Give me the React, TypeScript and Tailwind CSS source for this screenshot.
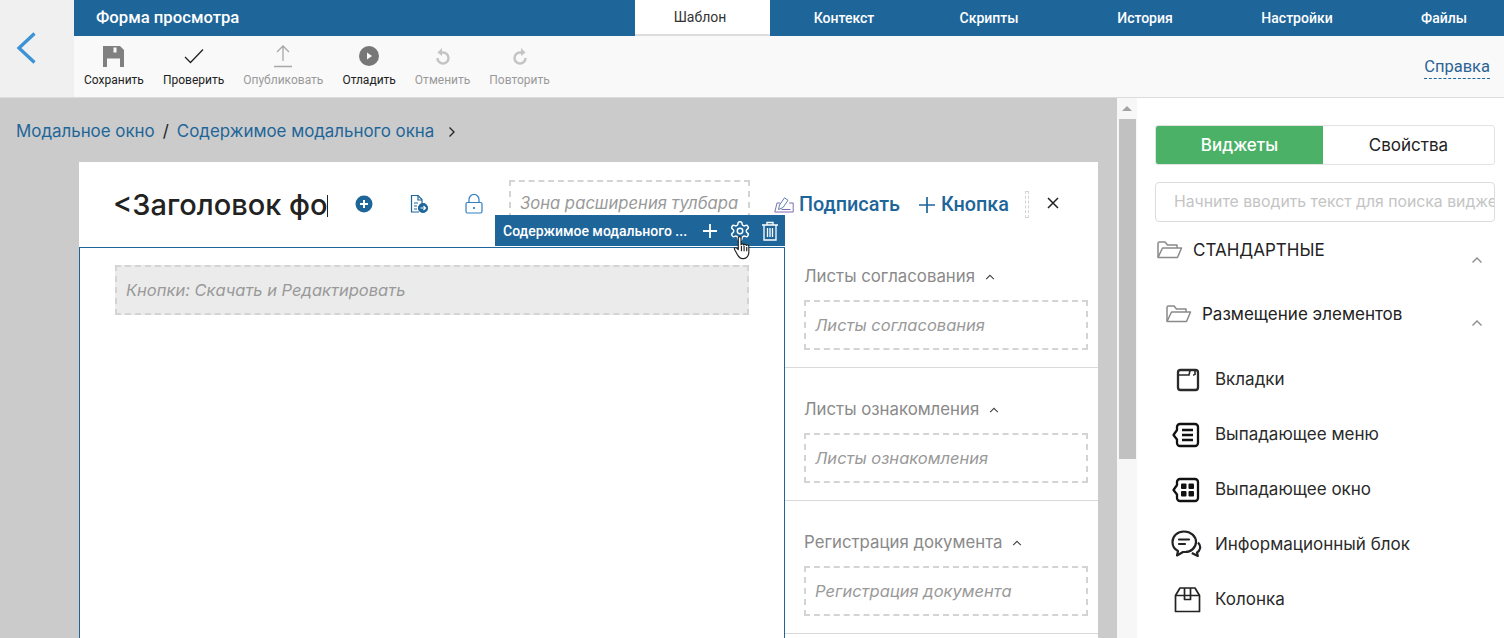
import React from "react";

const R = "font-['Roboto',sans-serif]";
const I = "font-['Inter',sans-serif]";

const Tab = ({ label, w, active }: { label: string; w: string; active?: boolean }) => (
  <div className={`${w} shrink-0 flex items-center justify-center text-[14px] ${active ? "bg-white text-[#333] border-b-2 border-[#ddd]" : "text-white font-medium"}`}>
    {label}
  </div>
);

const Tool = ({ label, dim, icon }: { label: string; dim?: boolean; icon: React.ReactNode }) => (
  <div className="flex flex-col items-center">
    <div className="h-[30px] flex items-center justify-center">{icon}</div>
    <div className={`text-[12px] leading-[14px] mt-[2px] ${dim ? "text-[#999]" : "text-[#222]"}`}>{label}</div>
  </div>
);

const Folder = () => (
  <svg width="27" height="20" viewBox="0 0 27 20" fill="none" stroke="#8a8a8a" strokeWidth="1.5" strokeLinejoin="round">
    <path d="M2 17V3.500C2 2.600 2.600 2 3.500 2H9l2.500 3H21v3" />
    <path d="M2 17.500 6.500 8h19l-4 9.500z" />
  </svg>
);

const Chevron = ({ c = "#8a8a8a", s = 14 }: { c?: string; s?: number }) => (
  <svg width={s} height={s} viewBox="0 0 14 14" fill="none" stroke={c} strokeWidth="1.3">
    <path d="M2.500 9.500 7 5l4.500 4.500" />
  </svg>
);

const Section = ({ title }: { title: string }) => (
  <div className={`h-[120px] mb-[13px] border-b border-[#d9d9d9] pl-[19px] pr-[10px] pt-[19px] shrink-0 ${I}`}>
    <div className="flex items-center gap-[9px] h-[20px] text-[16.800px] text-[#8a8a8a]">
      {title}
      <Chevron c="#444" s={12} />
    </div>
    <div className="mt-[13px] h-[50px] border-2 border-dashed border-[#d4d4d4] flex items-center pl-[9px] text-[16.500px] italic text-[#999]">
      {title}
    </div>
  </div>
);

const Item = ({ label, icon }: { label: string; icon: React.ReactNode }) => (
  <div className="h-[55px] flex items-center">
    <div className="w-[60px] pl-[21px] shrink-0 flex justify-start">{icon}</div>
    <span className="text-[17px] text-[#2a2a2a]">{label}</span>
  </div>
);

export default function App() {
  return (
    <div className={`w-[1504px] h-[638px] overflow-hidden flex flex-col bg-white ${R}`}>
      {/* top */}
      <div className="h-[98px] flex shrink-0 border-b border-[#dcdcdc]">
        <div className="w-[74px] shrink-0 bg-[#f0f0f0] flex items-center pl-[16px] pb-[2px]">
          <svg width="20" height="32" viewBox="0 0 20 32" fill="none" stroke="#3a93d6" strokeWidth="3.300">
            <path d="M18.500 1.500 3 16l15.500 14.500" />
          </svg>
        </div>
        <div className="flex-1 flex flex-col min-w-0">
          <div className="h-9 bg-[#1e6599] flex">
            <div className="w-[561px] shrink-0 pl-[22px] flex items-center text-[16.7px] font-medium text-white">Форма просмотра</div>
            <Tab label="Шаблон" w="w-[135px] pr-[5px]" active />
            <Tab label="Контекст" w="w-[148px]" />
            <Tab label="Скрипты" w="w-[142px]" />
            <Tab label="История" w="w-[170px]" />
            <Tab label="Настройки" w="w-[134px]" />
            <Tab label="Файлы" w="w-[140px] pl-[20px]" />
          </div>
          <div className="flex-1 bg-[#f9f9f9] flex items-start pl-[10px] pt-[5px] pr-[14px]">
            <div className="flex gap-[19px]">
              <Tool label="Сохранить" icon={
                <svg width="21" height="21" viewBox="0 0 21 21" fill="#808080" fillRule="evenodd"><path d="M0 0h17l4 4v17H0zM10.500 1.500v5h3v-5zM4 12.500V21h13v-8.500z" /></svg>
              } />
              <Tool label="Проверить" icon={
                <svg width="20" height="16" viewBox="0 0 20 16" fill="none" stroke="#222" strokeWidth="1.300"><path d="M1 9l5.500 5.500L19 1.500" /></svg>
              } />
              <Tool label="Опубликовать" dim icon={
                <svg width="20" height="24" viewBox="0 0 20 24" fill="none" stroke="#a8a8a8" strokeWidth="1.300"><path d="M10 17V2M4 8l6-6 6 6M1 22.500h18" /></svg>
              } />
              <Tool label="Отладить" icon={
                <svg width="20" height="20" viewBox="0 0 20 20"><circle cx="10" cy="10" r="10" fill="#777" /><path d="M8 6.500 13 10l-5 3.500z" fill="#fff" /></svg>
              } />
              <Tool label="Отменить" dim icon={
                <svg width="16" height="18" viewBox="0 0 16 18" fill="none" stroke="#c4c4c4" strokeWidth="2.500"><path d="M5 5.500h3a5.500 5.500 0 1 1-5.500 5.500" /><path d="M7 1 2.500 5.500 7 9" fill="#c4c4c4" stroke="none" /></svg>
              } />
              <Tool label="Повторить" dim icon={
                <svg width="16" height="18" viewBox="0 0 16 18" fill="none" stroke="#c4c4c4" strokeWidth="2.500"><path d="M11 5.500H8a5.500 5.500 0 1 0 5.500 5.500" /><path d="M9 1l4.500 4.500L9 9" fill="#c4c4c4" stroke="none" /></svg>
              } />
            </div>
            <div className="ml-auto mt-[14px] text-[16.500px] leading-[23px] text-[#2b6396] border-b border-dashed border-[#1e6599]">Справка</div>
          </div>
        </div>
      </div>

      {/* main */}
      <div className="flex-1 flex min-h-0">
        <div className="w-[1117px] bg-[#cbcbcb] flex flex-col shrink-0 min-h-0">
          <div className={`h-[64px] pl-[16px] flex items-center gap-[8px] text-[16.900px] text-[#1e6599] shrink-0 pt-[4px] ${I}`}>
            <span>Модальное окно</span>
            <span className="text-[#222]">/</span>
            <span>Содержимое модального окна</span>
            <svg width="12" height="12" viewBox="0 0 12 12" fill="none" stroke="#222" strokeWidth="1.300" className="ml-[4px]"><path d="M3.500 1.500 8 6l-4.500 4.500" /></svg>
          </div>
          <div className="ml-[79px] w-[1019px] flex-1 bg-white flex flex-col min-h-0 relative">
            {/* modal header */}
            <div className="h-[85px] shrink-0 flex items-start relative">
              <div className="ml-[34px] mt-[24px] w-[214px] h-[38px] overflow-hidden whitespace-nowrap text-[29px] leading-[38px] text-[#222] font-['Inter',sans-serif] font-medium">&lt;Заголовок фо</div>
              <div className="w-px h-[22px] mt-[33px] bg-[#222] shrink-0" />
              <div className="ml-[27px] mt-[33px]">
                <svg width="18" height="18" viewBox="0 0 18 18"><circle cx="9" cy="9" r="8.500" fill="#1e6599" /><path d="M9 5v8M5 9h8" stroke="#fff" strokeWidth="2" /></svg>
              </div>
              <div className="ml-[36px] mt-[32px]">
                <svg width="20" height="20" viewBox="0 0 20 20" fill="none" stroke="#1e6599" strokeWidth="1.200"><path d="M10 18H2.500V1.500H9l4 4V9" /><path d="M9 1.500V6h4M5 9h4M5 12h3M5 15h3" /><circle cx="14" cy="14" r="4.500" fill="#1e6599" /><path d="M11.500 14h5M14.500 12l2 2-2 2" stroke="#fff" /></svg>
              </div>
              <div className="ml-[36px] mt-[32px]">
                <svg width="18" height="20" viewBox="0 0 18 20" fill="none" stroke="#2f7fc1" strokeWidth="1.200"><rect x="1" y="8.500" width="16" height="10.500" rx="1.500" /><path d="M4 8.500V5.500a5 5 0 0 1 10 0v3" /><path d="M9 13v2" strokeWidth="1.800" /></svg>
              </div>
              <div className={`ml-[26px] mt-[18px] w-[241px] h-[50px] border-2 border-dashed border-[#d4d4d4] pl-[9px] pt-[11px] text-[16.600px] leading-[20px] italic text-[#999] whitespace-nowrap ${I}`}>Зона расширения тулбара</div>
              <div className="ml-[24px] mt-[35px]">
                <svg width="20" height="16" viewBox="0 0 20 16" fill="none" stroke="#7a6db0" strokeWidth="1"><path d="M6 6H3L.8 15h18.400V6h-4" /><path d="M4.500 12.500 5.500 8 10.500.8l3.500 2.500L9 10.500z" stroke="#5a7fa8" /><path d="M7.500 12.500h9" /></svg>
              </div>
              <div className="ml-[5px] mt-[31px] text-[19.800px] leading-[24px] text-[#1e6599] font-medium">Подписать</div>
              <div className="ml-[19px] mt-[31px] flex items-center text-[19.800px] leading-[24px] text-[#1e6599] font-medium">
                <svg width="16" height="16" viewBox="0 0 16 16" stroke="#1e6599" strokeWidth="1.700" className="mr-[6px]"><path d="M8 0v16M0 8h16" /></svg>
                Кнопка
              </div>
              <div className="ml-[16px] mt-[29px] w-[4px] h-[27px] border border-dashed border-[#d4d4d4]" />
              <div className="ml-[18px] mt-[35px]">
                <svg width="12" height="12" viewBox="0 0 12 12" stroke="#222" strokeWidth="1.500"><path d="M1 1l10 10M11 1 1 11" /></svg>
              </div>
              {/* selected overlay */}
              <div className="absolute left-[416px] top-[53px] w-[290px] h-[31px] bg-[#1e6599] flex items-center pl-[8px] pt-[1px] text-white">
                <span className="w-[184px] text-[14px] font-medium whitespace-nowrap overflow-hidden">Содержимое модального ...</span>
                <svg width="16" height="16" viewBox="0 0 16 16" stroke="#fff" strokeWidth="1.800" className="ml-[15px]"><path d="M8 1v14M1 8h14" /></svg>
                <svg width="22" height="22" viewBox="0 0 24 24" fill="none" stroke="#fff" strokeWidth="1.600" strokeLinecap="round" strokeLinejoin="round" className="ml-[11px]"><path d="M12.220 2h-.44a2 2 0 0 0-2 2v.18a2 2 0 0 1-1 1.730l-.43.250a2 2 0 0 1-2 0l-.15-.080a2 2 0 0 0-2.730.730l-.22.380a2 2 0 0 0 .730 2.730l.15.100a2 2 0 0 1 1 1.720v.510a2 2 0 0 1-1 1.740l-.15.090a2 2 0 0 0-.730 2.730l.22.380a2 2 0 0 0 2.730.730l.15-.080a2 2 0 0 1 2 0l.43.250a2 2 0 0 1 1 1.730V20a2 2 0 0 0 2 2h.44a2 2 0 0 0 2-2v-.18a2 2 0 0 1 1-1.730l.43-.250a2 2 0 0 1 2 0l.15.080a2 2 0 0 0 2.730-.730l.22-.390a2 2 0 0 0-.730-2.730l-.15-.080a2 2 0 0 1-1-1.740v-.500a2 2 0 0 1 1-1.740l.15-.090a2 2 0 0 0 .730-2.730l-.22-.380a2 2 0 0 0-2.730-.730l-.15.080a2 2 0 0 1-2 0l-.43-.250a2 2 0 0 1-1-1.730V4a2 2 0 0 0-2-2z" /><circle cx="12" cy="12" r="3" /></svg>
                <svg width="18" height="20" viewBox="0 0 18 20" fill="none" stroke="#fff" strokeWidth="1.300" className="ml-[10px]"><path d="M1 4h16M6 4V1.500h6V4M3 4v15h12V4M6.500 7v9M9 7v9M11.500 7v9" /></svg>
              </div>
              {/* mouse pointer */}
              <svg width="19" height="26" viewBox="0 0 18 24" className="absolute left-[654px] top-[73px]" fill="#fff" stroke="#222" strokeWidth="1.100" strokeLinejoin="round"><path d="M5 2.500c0-1.800 2.600-1.800 2.600 0V9c.3-1.200 2.400-1.200 2.600.2.300-1 2.300-1 2.500.4.500-.8 2.300-.6 2.300 1V16c0 3-2 6-5 6H9c-2.500 0-3.500-1.500-5-4L1.500 13.500C.8 12 2.500 11 3.600 12L5 13.500z" /><path d="M8 10v5M10.500 10v5M13 11v4" fill="none" /></svg>
            </div>
            {/* modal body */}
            <div className="flex-1 flex min-h-0 overflow-hidden">
              <div className={`w-[706px] shrink-0 border-t border-l border-r border-[#1e6599] pl-[35px] pt-[17px] ${I}`}>
                <div className="w-[634px] h-[50px] bg-[#ebebeb] border-2 border-dashed border-[#d4d4d4] flex items-center pl-[9px] text-[16.500px] italic text-[#999]">Кнопки: Скачать и Редактировать</div>
              </div>
              <div className="flex-1 flex flex-col pt-[1px]">
                <Section title="Листы согласования" />
                <Section title="Листы ознакомления" />
                <Section title="Регистрация документа" />
              </div>
            </div>
          </div>
        </div>
        {/* scrollbar */}
        <div className="w-[20px] bg-[#f7f7f7] flex flex-col items-center shrink-0">
          <div className="h-[21px] flex items-center justify-center">
            <div className="w-0 h-0 border-l-[5px] border-r-[5px] border-b-[5px] border-l-transparent border-r-transparent border-b-[#a3a3a3]" />
          </div>
          <div className="w-[17px] h-[340px] bg-[#c1c1c1]" />
        </div>
        {/* right panel */}
        <div className={`flex-1 bg-white pl-[18px] pt-[27px] overflow-hidden ${I}`}>
          <div className="w-[340px] h-[40px] flex border border-[#e3e3e3] rounded-[3px] overflow-hidden">
            <div className="w-[167px] bg-[#4bb166] text-white flex items-center justify-center text-[17px] font-medium pt-[1px]">Виджеты</div>
            <div className="flex-1 flex items-center justify-center text-[17px] text-[#222] pt-[1px]">Свойства</div>
          </div>
          <div className="w-[340px] h-[40px] mt-[17px] border border-[#dcdcdc] rounded-[4px] pl-[18px] flex items-center overflow-hidden whitespace-nowrap text-[15.800px] text-[#c4c4c4]">Начните вводить текст для поиска видже</div>
          <div className="w-[340px] h-[40px] mt-[18px] flex items-start pl-[1px] text-[17px] text-[#222] relative">
            <Folder />
            <span className="ml-[10px] leading-[20px]">СТАНДАРТНЫЕ</span>
            <span className="absolute right-[11px] top-[13px]"><Chevron /></span>
          </div>
          <div className="w-[340px] h-[40px] mt-[24px] flex items-start pl-[10px] text-[17px] text-[#222] relative">
            <Folder />
            <span className="ml-[10px] leading-[20px]">Размещение элементов</span>
            <span className="absolute right-[11px] top-[12px]"><Chevron /></span>
          </div>
          <div className="mt-[8px]">
            <Item label="Вкладки" icon={
              <svg width="24" height="24" viewBox="0 0 24 24" fill="none" stroke="#2a2a2a" strokeWidth="2.300"><rect x="2" y="2" width="20" height="20" rx="2.500" /><path d="M2 7h11l1-4.500M17 7h1.500M19 3v4" strokeWidth="1.600" /></svg>
            } />
            <Item label="Выпадающее меню" icon={
              <svg width="30" height="26" viewBox="0 0 30 26" className="ml-[-5px]" fill="none" stroke="#111" strokeWidth="2.300"><path d="M6 8V5a3 3 0 0 1 3-3h15a3 3 0 0 1 3 3v16a3 3 0 0 1-3 3H9a3 3 0 0 1-3-3v-3.500L2.500 13z" strokeLinejoin="round" /><path d="M11 8h11M11 13h11M11 18h11" /></svg>
            } />
            <Item label="Выпадающее окно" icon={
              <svg width="30" height="26" viewBox="0 0 30 26" className="ml-[-5px]" fill="none" stroke="#111" strokeWidth="2.300"><path d="M6 8V5a3 3 0 0 1 3-3h15a3 3 0 0 1 3 3v16a3 3 0 0 1-3 3H9a3 3 0 0 1-3-3v-3.500L2.500 13z" strokeLinejoin="round" /><rect x="10" y="6.500" width="5.500" height="5.500" rx="1" fill="#111" stroke="none" /><rect x="17.500" y="6.500" width="5.500" height="5.500" rx="1" fill="#111" stroke="none" /><rect x="10" y="14" width="5.500" height="5.500" rx="1" fill="#111" stroke="none" /><rect x="17.500" y="14" width="5.500" height="5.500" rx="1" fill="#111" stroke="none" /></svg>
            } />
            <Item label="Информационный блок" icon={
              <svg width="32" height="32" viewBox="0 0 32 32" className="ml-[-6px]" fill="none" stroke="#222" strokeWidth="2.200" strokeLinejoin="round"><path d="M14 2.500C7.500 2.500 2.500 7 2.500 13c0 4 2.500 7.500 5.500 9l-1 4.500 6-3.500h2c6 0 11-4.500 11-10s-5-10.500-12-10.500z" /><path d="M9 10.500h10M9 15h6" strokeLinecap="round" /><path d="M28 13.500c2 2 2.500 4 2 6-.5 2-2 3.500-3 4l.8 3.500-6-3" /></svg>
            } />
            <Item label="Колонка" icon={
              <svg width="27" height="27" viewBox="0 0 27 27" className="ml-[-2px]" fill="none" stroke="#222" strokeWidth="1.700" strokeLinejoin="round"><path d="M1.500 9.500 6 2h15l4.500 7.500V25.500h-24z" /><path d="M1.500 9.500h24M10.500 2v11.500h6V2" /></svg>
            } />
          </div>
        </div>
      </div>
    </div>
  );
}
